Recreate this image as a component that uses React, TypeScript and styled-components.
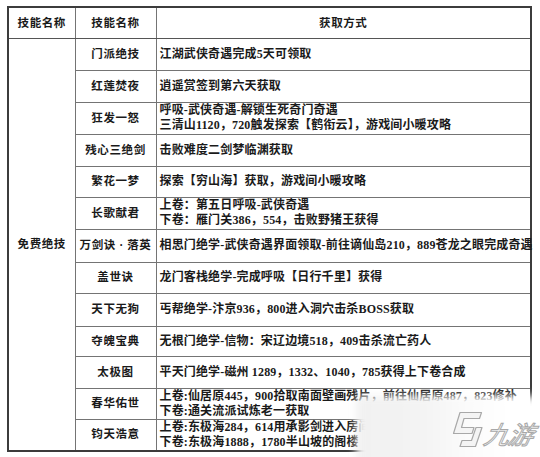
import React from "react";
import styled, { createGlobalStyle } from "styled-components";

type Row = {
  name: string;
  how: string[];
  h: number;
};

const ROWS: Row[] = [
  { name: "门派绝技", how: ["江湖武侠奇遇完成5天可领取"], h: 32 },
  { name: "红莲焚夜", how: ["逍遥赏签到第六天获取"], h: 32 },
  {
    name: "狂发一怒",
    how: ["呼吸-武侠奇遇-解锁生死奇门奇遇", "三清山1120，720触发探索【鹤衔云】，游戏间小暖攻略"],
    h: 32,
  },
  { name: "残心三绝剑", how: ["击败难度二剑梦临渊获取"], h: 32 },
  { name: "繁花一梦", how: ["探索【穷山海】获取，游戏间小暖攻略"], h: 31 },
  {
    name: "长歌献君",
    how: ["上卷：第五日呼吸-武侠奇遇", "下卷：雁门关386，554，击败野猪王获得"],
    h: 32,
  },
  {
    name: "万剑诀 · 落英",
    how: ["相思门绝学-武侠奇遇界面领取-前往谪仙岛210，889苍龙之眼完成奇遇"],
    h: 33,
  },
  { name: "盖世诀", how: ["龙门客栈绝学-完成呼吸【日行千里】获得"], h: 31 },
  { name: "天下无狗", how: ["丐帮绝学-汴京936，800进入洞穴击杀BOSS获取"], h: 33 },
  { name: "夺魄宝典", how: ["无根门绝学-信物：宋辽边境518，409击杀流亡药人"], h: 30 },
  { name: "太极图", how: ["平天门绝学-磁州 1289，1332、1040，785获得上下卷合成"], h: 32 },
  {
    name: "春华佑世",
    how: ["上卷:仙居原445，900拾取南面壁画残片，前往仙居原487，823修补", "下卷:通关流派试炼老一获取"],
    h: 31,
  },
  {
    name: "钧天浩意",
    how: ["上卷:东极海284，614用承影剑进入房间", "下卷:东极海1888，1780半山坡的阁楼"],
    h: 32,
  },
];

const GlobalStyle = createGlobalStyle`
  html, body {
    margin: 0;
    padding: 0;
    background: #fff;
  }
`;

const App = () => {
  return (
    <Page>
      <GlobalStyle />
      <Table>
        <colgroup>
          <col style={{ width: 67 }} />
          <col style={{ width: 81 }} />
          <col style={{ width: 375 }} />
        </colgroup>
        <thead>
          <TableRow $h={31}>
            <HeadCell>技能名称</HeadCell>
            <HeadCell>技能名称</HeadCell>
            <HeadCell>获取方式</HeadCell>
          </TableRow>
        </thead>
        <tbody>
          {ROWS.map((row, index) => (
            <TableRow key={row.name} $h={row.h}>
              {index === 0 ? <GroupCell rowSpan={ROWS.length}>免费绝技</GroupCell> : null}
              <NameCell>{row.name}</NameCell>
              <HowCell>
                {row.how.map((line) => (
                  <Line key={line}>{line}</Line>
                ))}
              </HowCell>
            </TableRow>
          ))}
        </tbody>
      </Table>

      <Watermark>
        <Fade />
        <Logo>
          <svg width="34" height="37" viewBox="0 0 34 37">
            <path
              d="M11 1.5 L32.5 1.5 L30.5 7.5 L15 7.5 L12.5 16.5 L25 16.5 L23 22.5 L4.5 22.5 Z"
              fill="#f4f4f4"
              stroke="#a8a8a8"
              strokeWidth="1.2"
              strokeLinejoin="round"
            />
            <path
              d="M27 16.5 L33 16.5 L26.5 35.5 L11 35.5 L13 29.5 L22.5 29.5 Z"
              fill="#f4f4f4"
              stroke="#a8a8a8"
              strokeWidth="1.2"
              strokeLinejoin="round"
            />
          </svg>
          <LogoText>九游</LogoText>
        </Logo>
      </Watermark>
    </Page>
  );
};

const Page = styled.div`
  position: relative;
  width: 540px;
  height: 457px;
  overflow: hidden;
  padding: 6px 0 0 7px;
  box-sizing: border-box;
  background: #fff;
  font-family: "Liberation Serif", "Noto Sans CJK SC", serif;
  font-weight: 700;
  font-size: 11.5px;
  color: #1a1a1a;
`;

const Table = styled.table`
  width: 523px;
  table-layout: fixed;
  border-collapse: collapse;
  border: 2px solid #3c3c3c;
`;

const TableRow = styled.tr<{ $h: number }>`
  height: ${({ $h }) => $h}px;
`;

const Cell = styled.td`
  border: 1px solid #747474;
  padding: 0;
  vertical-align: middle;
  line-height: 15px;
`;

const HeadCell = styled(Cell).attrs({ as: "th" })`
  text-align: center;
  font-weight: 700;
  letter-spacing: 0.6px;
  padding-top: 2px;
  border-bottom-color: #555;
`;

const GroupCell = styled(Cell)`
  text-align: center;
  letter-spacing: 0.6px;
`;

const NameCell = styled(Cell)`
  text-align: center;
  letter-spacing: 0.6px;
  white-space: nowrap;
`;

const HowCell = styled(Cell)`
  text-align: left;
  padding: 0 3px;
  white-space: nowrap;
  overflow: visible;
`;

const Line = styled.div`
  font-size: 12px;
  line-height: 15px;
  letter-spacing: 0.15px;
`;

const Watermark = styled.div`
  position: absolute;
  left: 350px;
  top: 392px;
  right: 0;
  bottom: 0;
`;

const Fade = styled.div`
  position: absolute;
  left: 6px;
  top: 4px;
  right: -20px;
  bottom: -20px;
  background: linear-gradient(90deg, #f1f1f1 0%, #f3f3f3 30%, #fbfbfb 55%, #ffffff 75%);
  filter: blur(4px);
`;

const Logo = styled.div`
  position: absolute;
  left: 99px;
  top: 19px;
  display: flex;
  align-items: flex-end;
  gap: 2px;
`;

const LogoText = styled.span`
  font-family: "Noto Sans CJK SC", sans-serif;
  font-size: 25px;
  font-weight: 400;
  font-style: italic;
  line-height: 30px;
  color: #f6f6f6;
  -webkit-text-stroke: 1px #a8a8a8;
  letter-spacing: -1px;
  display: inline-block;
  transform: skewX(-12deg);
`;

export default App;
